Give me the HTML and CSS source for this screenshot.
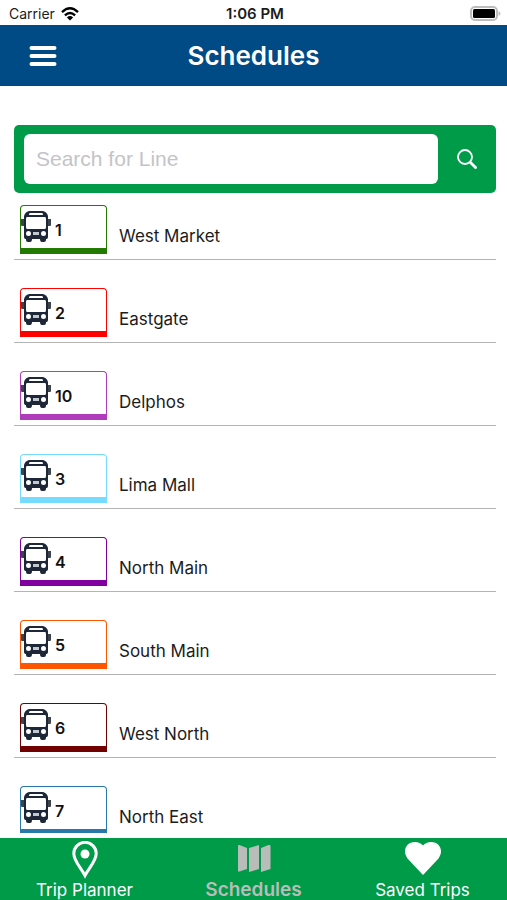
FILE: index.html
```html
<!DOCTYPE html>
<html lang="en">

<head>
  <meta charset="UTF-8">
  <meta name="viewport" content="width=device-width, initial-scale=1.0">
  <title>Schedules</title>
  <link rel="stylesheet" href="styles.css">
</head>

<body>
  <!-- shared bus icon -->
  <svg class="icon-defs" aria-hidden="true">
    <symbol id="bus" viewBox="0 0 30 31">
      <path fill="#3d434b" d="M0 8h3v7H1q-1 0-1-1zM27 8h3v6q0 1-1 1h-2z" />
      <path fill="#1d2738" fill-rule="evenodd" d="M8 0h14q4 1 5 5v21q0 1-1 2h-1v1q0 2-2 2h-2q-2 0-2-3h-8q0 3-2 3H7q-2 0-2-2v-1H4q-1-1-1-2V5q1-4 5-5zM9 2q-1 0-1 2h14q0-2-1-2zM6 6q-1 0-1 2v8q0 2 1 2h18q1 0 1-2V8q0-2-1-2zM7.500 20a2.500 2.500 0 1 0 0 5a2.500 2.500 0 1 0 0-5zM22.500 20a2.500 2.500 0 1 0 0 5a2.500 2.500 0 1 0 0-5z" />
      <path fill="#c3c8ce" d="M12 21h6v3h-6z" />
    </symbol>
  </svg>

  <div class="app">
    <div class="status-bar">
      <div class="carrier">
        <span>Carrier</span>
        <svg class="wifi" viewBox="0 0 18 14" aria-hidden="true">
          <path fill="none" stroke="#000" stroke-width="2.400" d="M1 5.200Q9-2.600 17 5.200M3.900 8.300q5.100-4.600 10.200 0" />
          <path d="M5.900 10.400q3.100-2.600 6.200 0L9 13.600z" />
        </svg>
      </div>
      <div class="time">1:06 PM</div>
      <div class="battery">
        <svg viewBox="0 0 31 15" aria-hidden="true">
          <rect x="1" y="1" width="26" height="13" rx="4" fill="#fff" stroke="#bdbdbd" stroke-width="2" />
          <rect x="3" y="3" width="22" height="9" rx="1.500" />
          <path fill="#bdbdbd" d="M28.500 5q2 1 2 2.500t-2 2.500z" />
        </svg>
      </div>
    </div>

    <header class="header">
      <button class="menu-btn" type="button" aria-label="Menu">
        <svg viewBox="0 0 28 20" aria-hidden="true">
          <path stroke="#fff" stroke-width="4" stroke-linecap="round" d="M2.500 2h23M2.500 10h23M2.500 18h23" />
        </svg>
      </button>
      <h1 class="title">Schedules</h1>
    </header>

    <main class="content">
      <form class="search">
        <input class="search-input" type="text" placeholder="Search for Line" aria-label="Search for Line">
        <button class="search-btn" type="button" aria-label="Search">
          <svg viewBox="0 0 20 20" aria-hidden="true">
            <circle cx="8" cy="8" r="7" fill="none" stroke="#fff" stroke-width="1.800" />
            <path stroke="#fff" stroke-width="2.800" d="M13 13l6.500 6.500" />
          </svg>
        </button>
      </form>

      <ul class="lines">
        <li><a class="line" href="#">
          <span class="badge green"><svg class="bus"><use href="#bus" /></svg><b>1</b></span>
          <span class="line-name">West Market</span>
        </a></li>
        <li><a class="line" href="#">
          <span class="badge red"><svg class="bus"><use href="#bus" /></svg><b>2</b></span>
          <span class="line-name">Eastgate</span>
        </a></li>
        <li><a class="line" href="#">
          <span class="badge orchid"><svg class="bus"><use href="#bus" /></svg><b>10</b></span>
          <span class="line-name">Delphos</span>
        </a></li>
        <li><a class="line" href="#">
          <span class="badge sky"><svg class="bus"><use href="#bus" /></svg><b>3</b></span>
          <span class="line-name">Lima Mall</span>
        </a></li>
        <li><a class="line" href="#">
          <span class="badge purple"><svg class="bus"><use href="#bus" /></svg><b>4</b></span>
          <span class="line-name">North Main</span>
        </a></li>
        <li><a class="line" href="#">
          <span class="badge orange"><svg class="bus"><use href="#bus" /></svg><b>5</b></span>
          <span class="line-name">South Main</span>
        </a></li>
        <li><a class="line" href="#">
          <span class="badge maroon"><svg class="bus"><use href="#bus" /></svg><b>6</b></span>
          <span class="line-name">West North</span>
        </a></li>
        <li><a class="line" href="#">
          <span class="badge blue"><svg class="bus"><use href="#bus" /></svg><b>7</b></span>
          <span class="line-name">North East</span>
        </a></li>
      </ul>
    </main>

    <nav class="tabs">
      <a class="tab" href="#">
        <svg viewBox="0 0 38 38" aria-hidden="true">
          <path fill="none" stroke="#fff" stroke-width="3" d="M19 34.500C15 27 7.800 20 7.800 12.500a11.200 11.200 0 0 1 22.400 0C30.200 20 23 27 19 34.500z" />
          <circle cx="19" cy="13" r="4.500" fill="#fff" />
        </svg>
        <span>Trip Planner</span>
      </a>
      <a class="tab active" href="#">
        <svg viewBox="0 0 38 38" aria-hidden="true">
          <path fill="#b9bdb9" d="M3 5q0-1.500 1.500-1L12 7v21l-7.500 2.500Q3 31 3 29.500zM14 7l10-3v24l-10 3zM26 7l7.500-3Q35.500 3.500 35.500 5v23L26 31z" />
        </svg>
        <span>Schedules</span>
      </a>
      <a class="tab" href="#">
        <svg viewBox="0 0 38 38" aria-hidden="true">
          <path fill="#fff" d="M19 34L3.500 17.500C-2 10 2 1 11 1q5 0 8 3.500q3-3.500 8-3.500c9 0 13 9 7.500 16.500z" />
        </svg>
        <span>Saved Trips</span>
      </a>
    </nav>
  </div>
</body>

</html>
```
FILE: styles.css
```css
* {
  box-sizing: border-box;
}

body,
h1,
ul {
  margin: 0;
  padding: 0;
}

body {
  font-family: Inter, "Liberation Sans", sans-serif;
  color: #1c1c1c;
  background: #fff;
}

ul {
  list-style: none;
}

a {
  color: inherit;
  text-decoration: none;
}

button {
  padding: 0;
  border: 0;
  background: none;
  cursor: pointer;
}

svg {
  display: block;
}

.icon-defs {
  display: none;
}

.app {
  display: flex;
  flex-direction: column;
  height: 100vh;
}

/* status bar */
.status-bar {
  display: grid;
  grid-template-columns: 1fr auto 1fr;
  align-items: center;
  height: 25px;
  padding: 2px 6px 0 9px;
  font-size: 14px;
  flex: none;
}

.carrier {
  display: flex;
  align-items: center;
  gap: 6px;
}

.wifi {
  width: 18px;
  height: 14px;
}

.time {
  font-size: 15px;
  font-weight: 600;
}

.battery svg {
  width: 31px;
  height: 15px;
  margin-left: auto;
}

/* header */
.header {
  display: grid;
  grid-template-columns: 56px 1fr 56px;
  align-items: center;
  height: 61px;
  padding: 0 15px;
  background: #004b85;
  color: #fff;
  flex: none;
}

.menu-btn {
  display: flex;
  justify-content: center;
}

.menu-btn svg {
  width: 28px;
  height: 20px;
}

.title {
  font-size: 26px;
  font-weight: 600;
  line-height: 32px;
  text-align: center;
}

/* content */
.content {
  flex: 1;
  min-height: 0;
  overflow: hidden;
  padding: 39px 11px 0 14px;
}

.search {
  display: flex;
  height: 68px;
  padding: 9px 0 9px 10px;
  border-radius: 5px;
  background: #009b48;
}

.search-input {
  flex: 1;
  min-width: 0;
  padding: 0 12px;
  border: 0;
  border-radius: 6px;
  background: #fff;
  font-family: "Liberation Sans", sans-serif;
  font-size: 21px;
}

.search-input::placeholder {
  color: #c4c4c8;
}

.search-btn {
  display: flex;
  justify-content: center;
  align-items: center;
  width: 58px;
}

.search-btn svg {
  width: 20px;
  height: 20px;
}

.line {
  display: flex;
  align-items: flex-start;
  gap: 12px;
  height: 83px;
  padding: 28px 6px 0;
  border-bottom: 1px solid #b4b4b4;
}

.lines li:first-child .line {
  height: 67px;
  padding-top: 12px;
}

.badge {
  display: flex;
  gap: 4px;
  width: 87px;
  height: 49px;
  padding-top: 5px;
  border: 1px solid;
  border-bottom-width: 6px;
  border-radius: 4px 4px 0 0;
}

.badge b {
  color: #111;
  font-size: 16px;
  font-weight: 600;
  line-height: 38px;
}

.bus {
  width: 30px;
  height: 31px;
}

.line-name {
  padding-top: 20px;
  font-size: 17px;
  line-height: 22px;
}

.green {
  border-color: #237a00;
}

.red {
  border-color: #f00;
}

.orchid {
  border-color: #b03cbc;
}

.sky {
  border-color: #75dcff;
}

.purple {
  border-color: #8000a0;
}

.orange {
  border-color: #ff5500;
}

.maroon {
  border-color: #730000;
}

.blue {
  height: 47px;
  border-color: #2878aa;
  border-bottom-width: 4px;
}

/* bottom tabs */
.tabs {
  display: grid;
  grid-template-columns: repeat(3, 1fr);
  height: 62px;
  padding-top: 3px;
  background: #009b48;
  color: #fff;
  flex: none;
}

.tab {
  display: flex;
  flex-direction: column;
  align-items: center;
  font-size: 17px;
  line-height: 22px;
}

.tab svg {
  width: 38px;
  height: 38px;
}

.tab.active {
  color: #b9bdb9;
  font-size: 19px;
  font-weight: 600;
}
```
